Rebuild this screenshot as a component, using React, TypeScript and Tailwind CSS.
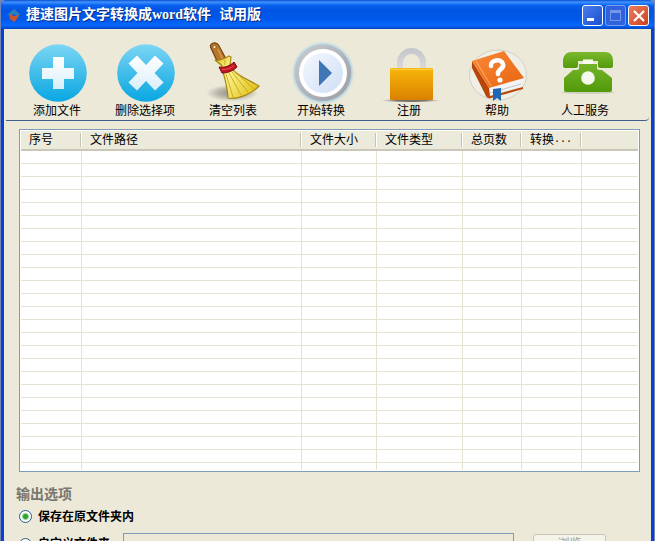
import React, { useState } from "react";

type ToolItem = { label: string; icon: React.ReactNode };

const columns = [
  { title: "序号", width: "w-[61px]" },
  { title: "文件路径", width: "w-[220px]" },
  { title: "文件大小", width: "w-[75px]" },
  { title: "文件类型", width: "w-[86px]" },
  { title: "总页数", width: "w-[59px]" },
  { title: "转换", dots: true, width: "w-[60px]" },
  { title: "", width: "" },
];

const rows = Array.from({ length: 24 }, (_, i) => i);

function BlueDisc({ children }: { children: React.ReactNode }) {
  return (
    <svg viewBox="0 0 60 60" className="size-15" aria-hidden="true">
      <defs>
        <linearGradient id="disc" x1="0" y1="0" x2="0" y2="1">
          <stop offset="0" stopColor="#7dd6f5" />
          <stop offset="0.5" stopColor="#41bdea" />
          <stop offset="1" stopColor="#08a7e2" />
        </linearGradient>
        <linearGradient id="mark" x1="0" y1="0" x2="0" y2="1">
          <stop offset="0" stopColor="#ffffff" />
          <stop offset="1" stopColor="#d9effa" />
        </linearGradient>
      </defs>
      <circle cx="31" cy="31" r="28.8" fill="url(#disc)" />
      {children}
    </svg>
  );
}

function AddIcon() {
  return (
    <BlueDisc>
      <path d="M26 15h11v11h10v11H37v10H26V37H15V26h11z" fill="url(#mark)" />
    </BlueDisc>
  );
}

function DeleteIcon() {
  return (
    <BlueDisc>
      <path
        d="M22 13.500l9 9.500 9-9.500 8.500 8-9 9.500 9 9.500-8.500 8-9-9.500-9 9.500-8.500-8 9-9.500-9-9.500z"
        fill="url(#mark)"
      />
    </BlueDisc>
  );
}

function BroomIcon() {
  return (
    <svg viewBox="0 0 60 60" className="size-15" aria-hidden="true">
      <defs>
        <radialGradient id="broomShadow">
          <stop offset="0" stopColor="#8d8a80" />
          <stop offset="0.5" stopColor="#b5b2a6" />
          <stop offset="1" stopColor="#ece9d8" />
        </radialGradient>
        <linearGradient id="straw" x1="0" y1="0" x2="1" y2="0.6">
          <stop offset="0" stopColor="#e2c62c" />
          <stop offset="0.4" stopColor="#fdf48e" />
          <stop offset="1" stopColor="#e3c524" />
        </linearGradient>
      </defs>
      <ellipse cx="29" cy="51" rx="26" ry="8.500" fill="url(#broomShadow)" />
      <path
        d="M7.500 5C7 1 13-1 15.500 3l7 13-8 4z"
        fill="#b9772b"
        stroke="#75410f"
        strokeWidth="1.2"
      />
      <path d="M15 7l5 11" stroke="#d89b4a" strokeWidth="1.500" />
      <circle cx="11.500" cy="5" r="1.500" fill="#fff5dc" stroke="#75410f" strokeWidth="0.6" />
      <path
        d="M12 18c3 1 9-1 14-4l2 1-1 8 4 6c6 6 17 10 25 15-6 7-21 14-31 12 0-9-3-19-6-30l-1-3z"
        fill="url(#straw)"
        stroke="#a68a14"
        strokeWidth="1.2"
        strokeLinejoin="round"
      />
      <path
        d="M23 32l7 23M26 31l12 22M29 30l16 20M31 29l20 18M16 20l4 4M22 18v5"
        stroke="#c4a61c"
        strokeWidth="0.900"
        fill="none"
      />
      <path
        d="M16 25c5 1 11-1 15-5l3 5c-4 4-9 6-15 6z"
        fill="#bf1620"
        stroke="#7c0a10"
        strokeWidth="1"
      />
      <path d="M19 27.500c5 0 9-1 12-4" stroke="#ef5358" strokeWidth="1" fill="none" />
    </svg>
  );
}

function PlayIcon() {
  return (
    <svg viewBox="0 0 60 60" className="size-15 overflow-visible" aria-hidden="true">
      <defs>
        <radialGradient id="glow">
          <stop offset="0.84" stopColor="#7dbbe8" />
          <stop offset="1" stopColor="#d5e3e4" stopOpacity="0" />
        </radialGradient>
        <linearGradient id="ring" x1="0" y1="0" x2="1" y2="1">
          <stop offset="0" stopColor="#cbccd0" />
          <stop offset="1" stopColor="#9c9da3" />
        </linearGradient>
        <linearGradient id="face" x1="0" y1="0" x2="1" y2="1">
          <stop offset="0" stopColor="#f3f7fe" />
          <stop offset="1" stopColor="#cfdff5" />
        </linearGradient>
      </defs>
      <circle cx="32" cy="31" r="32" fill="url(#glow)" />
      <circle cx="32" cy="31" r="28" fill="url(#ring)" />
      <circle cx="32" cy="31" r="24" fill="#fff" />
      <circle cx="32" cy="31" r="20" fill="url(#face)" />
      <path d="M28 18v26l13-13z" fill="#3f76b6" />
    </svg>
  );
}

function LockIcon() {
  return (
    <svg viewBox="0 0 60 60" className="size-15" aria-hidden="true">
      <defs>
        <linearGradient id="lockBody" x1="0" y1="0" x2="0" y2="1">
          <stop offset="0" stopColor="#f8b60a" />
          <stop offset="1" stopColor="#da8100" />
        </linearGradient>
        <linearGradient id="shackle" x1="0" y1="0" x2="0" y2="1">
          <stop offset="0" stopColor="#c6c7ca" />
          <stop offset="1" stopColor="#dcdcdd" />
        </linearGradient>
        <radialGradient id="lockShadow">
          <stop offset="0.5" stopColor="#77736a" />
          <stop offset="1" stopColor="#a5a297" stopOpacity="0" />
        </radialGradient>
      </defs>
      <ellipse cx="32" cy="58.500" rx="30" ry="2" fill="url(#lockShadow)" />
      <path
        d="M21 28v-7.500a11.500 11.500 0 0 1 23 0v7.500"
        fill="none"
        stroke="url(#shackle)"
        strokeWidth="6"
      />
      <rect x="11" y="26" width="43" height="32" rx="1.500" fill="url(#lockBody)" />
      <path d="M12 27.500h41" stroke="#ffd045" strokeWidth="1" />
    </svg>
  );
}

function HelpIcon() {
  return (
    <svg viewBox="0 0 60 60" className="size-15" aria-hidden="true">
      <defs>
        <linearGradient id="cover" x1="0" y1="0" x2="1" y2="1">
          <stop offset="0" stopColor="#f9893a" />
          <stop offset="1" stopColor="#e8640f" />
        </linearGradient>
      </defs>
      <ellipse cx="31" cy="33" rx="28.500" ry="25" fill="#f0eee5" stroke="#d2d0c6" />
      <path d="M22 45l33-9-1 8-31 10z" fill="#f4f4f7" />
      <path d="M23 51l31-9" stroke="#c4c5ce" strokeWidth="1" />
      <path d="M5 19l17 27 1 8 33-9v2l-32 9c-3 1-5-1-6-4L5 26z" fill="#b84608" />
      <path d="M5 19L37 9l20 27-35 10z" fill="url(#cover)" />
      <path d="M9 19l15 25" stroke="#ffad6d" strokeWidth="1" />
      <path d="M26 47l8-1v13l-4-3-4 3z" fill="#1c68b4" />
      <path
        d="M24 24c-1-6 10-8 12-2 2 5-6 5-5 10"
        fill="none"
        stroke="#fff"
        strokeWidth="4.500"
        strokeLinecap="round"
      />
      <circle cx="33" cy="38" r="2.600" fill="#fff" />
    </svg>
  );
}

function PhoneIcon() {
  return (
    <svg viewBox="0 0 60 60" className="size-15" aria-hidden="true">
      <defs>
        <linearGradient id="phone" x1="0" y1="0" x2="0" y2="1">
          <stop offset="0" stopColor="#7cb82d" />
          <stop offset="1" stopColor="#519a0b" />
        </linearGradient>
      </defs>
      <ellipse cx="33" cy="50.500" rx="27" ry="1.500" fill="#d0cfc0" />
      <path
        d="M16 10h34c6 0 8 4 8 9v5c0 1-1 2-2 2H45c-1 0-2-1-2-2v-5H23v5c0 1-1 2-2 2H10c-1 0-2-1-2-2v-5c0-5 3-9 8-9z"
        fill="url(#phone)"
      />
      <path
        d="M24 22h4v-5h10v5h4v4c0 2 2 2 5 2l10 8v12c0 1-1 2-2 2H11c-1 0-2-1-2-2V36l9-8c4 0 6 0 6-2z"
        fill="url(#phone)"
      />
      <rect x="28" y="17.500" width="10" height="4.500" fill="#f6f9ee" />
      <circle cx="33" cy="36" r="6.800" fill="#f6f9ee" />
    </svg>
  );
}

const tools: ToolItem[] = [
  { label: "添加文件", icon: <AddIcon /> },
  { label: "删除选择项", icon: <DeleteIcon /> },
  { label: "清空列表", icon: <BroomIcon /> },
  { label: "开始转换", icon: <PlayIcon /> },
  { label: "注册", icon: <LockIcon /> },
  { label: "帮助", icon: <HelpIcon /> },
  { label: "人工服务", icon: <PhoneIcon /> },
];

function TitleBar() {
  return (
    <header className="flex h-[29px] shrink-0 items-center bg-[linear-gradient(180deg,#0a4fd0_0%,#3f93ff_7%,#0a62ee_18%,#0054e3_35%,#0058ea_65%,#0567ff_88%,#0243c0_100%)] pl-[6px] pr-[5px]">
      <svg viewBox="0 0 14 14" className="size-[14px]" aria-hidden="true">
        <path d="M7 1l6 5-2 3-4-3-4 3-2-3z" fill="#2a7fb8" />
        <path d="M2 6l5 2 5-1-2 4-3 3-4-3z" fill="#c9552f" />
      </svg>
      <h1 className="ml-[5px] flex flex-1 gap-2 whitespace-nowrap text-sm font-bold leading-5 text-white [font-family:'Liberation_Serif','Noto_Sans_CJK_SC',serif] [text-shadow:1px_1px_0_#0a2a86]">
        <span>捷速图片文字转换成word软件</span>
        <span>试用版</span>
      </h1>
      <div className="flex gap-[2px] pt-[2px]">
        <button
          aria-label="最小化"
          className="flex size-[21px] items-end rounded-[3px] border border-white bg-linear-to-br from-[#4a7cec] to-[#1a4fd0] p-1"
        >
          <span className="h-[3px] w-[7px] bg-white" />
        </button>
        <button
          aria-label="最大化"
          disabled
          className="flex size-[21px] items-center justify-center rounded-[3px] border border-[#7c9df0] bg-[#2f62dc]"
        >
          <span className="size-[11px] border border-t-[3px] border-[#7696ea]" />
        </button>
        <button
          aria-label="关闭"
          className="flex size-[21px] items-center justify-center rounded-[3px] border border-white bg-linear-to-br from-[#ea7f60] to-[#cf3c14]"
        >
          <svg viewBox="0 0 12 12" className="size-3" aria-hidden="true">
            <path d="M1 1l10 10M11 1L1 11" stroke="#fff" strokeWidth="2.200" />
          </svg>
        </button>
      </div>
    </header>
  );
}

function FileTable() {
  return (
    <div className="ml-[15px] mr-[11px] mt-2 border border-[#7f9db9] bg-white p-px">
      <table className="w-full table-fixed border-separate border-spacing-0">
        <thead>
          <tr>
            {columns.map((col, i) => (
              <th
                key={i}
                className={`h-5 border-b-2 border-[#cbc7b8] bg-[#ebeadb] p-0 text-left text-xs font-normal ${col.width}`}
              >
                <div
                  className={`flex h-[14px] items-center whitespace-nowrap pl-2 leading-[14px] ${
                    i < 6 ? "mr-px border-r border-[#c7c5b2] shadow-[1px_0_0_#ffffff]" : ""
                  }`}
                >
                  {col.title}
                  {col.dots && (
                    <span className="text-[10px] [font-family:'Liberation_Mono',monospace]">...</span>
                  )}
                </div>
              </th>
            ))}
          </tr>
        </thead>
        <tbody>
          {rows.map((r) => (
            <tr key={r}>
              {columns.map((_, i) => (
                <td
                  key={i}
                  className={`h-[13px] border-b border-[#e6e3d0] p-0 ${i < 6 ? "border-r" : ""}`}
                />
              ))}
            </tr>
          ))}
          <tr>
            {columns.map((_, i) => (
              <td key={i} className={`h-[7px] border-[#e6e3d0] p-0 ${i < 6 ? "border-r" : ""}`} />
            ))}
          </tr>
        </tbody>
      </table>
    </div>
  );
}

const radioClass =
  "size-[13px] shrink-0 appearance-none rounded-full border border-[#2c5b87] bg-white checked:bg-[radial-gradient(circle,#2fa52c_0px,#2fa52c_2px,#ffffff_4px)]";

function OutputOptions() {
  const [target, setTarget] = useState("source");
  const [folder, setFolder] = useState("");

  return (
    <fieldset className="mt-3">
      <legend className="pl-3 text-sm font-bold leading-5 text-[#777770]">输出选项</legend>
      <div className="flex h-[25px] items-center pl-[15px]">
        <input
          id="source"
          type="radio"
          name="target"
          className={radioClass}
          checked={target === "source"}
          onChange={() => setTarget("source")}
        />
        <label htmlFor="source" className="pl-[6px] text-xs font-bold">
          保存在原文件夹内
        </label>
      </div>
      <div className="mt-1 flex items-center pl-[15px]">
        <input
          id="custom"
          type="radio"
          name="target"
          className={radioClass}
          checked={target === "custom"}
          onChange={() => setTarget("custom")}
        />
        <label htmlFor="custom" className="whitespace-nowrap pl-[6px] text-xs font-bold">
          自定义文件夹
        </label>
        <input
          type="text"
          aria-label="自定义文件夹"
          disabled={target !== "custom"}
          value={folder}
          onChange={(e) => setFolder(e.target.value)}
          className="ml-[13px] h-[22px] min-w-0 flex-1 border border-[#7f9db9] px-1 text-xs"
        />
        <button
          disabled={target !== "custom"}
          className="ml-[19px] mr-[45px] h-5 w-[73px] rounded-[3px] border border-[#c9c7ba] bg-[#f5f4ea] text-xs leading-4 text-[#a1a192]"
        >
          浏览
        </button>
      </div>
    </fieldset>
  );
}

export default function App() {
  return (
    <div className="h-screen overflow-hidden bg-[#6f86b8] px-px text-black [font-family:'Liberation_Sans','Noto_Sans_CJK_SC',sans-serif]">
      <div className="flex h-full flex-col overflow-hidden rounded-t-md bg-[#0b3fd0]">
        <TitleBar />
        <div className="mx-[3px] flex-1 bg-[#ece9d8]">
          <nav className="mx-[2px] flex h-[92px] rounded-br-sm border-b border-[#3c5f8c] pl-[7px] pt-[13px]">
            {tools.map((tool) => (
              <button key={tool.label} className="flex w-22 flex-col items-center">
                {tool.icon}
                <span className="whitespace-nowrap pt-px text-xs leading-4">{tool.label}</span>
              </button>
            ))}
          </nav>
          <FileTable />
          <OutputOptions />
        </div>
      </div>
    </div>
  );
}
